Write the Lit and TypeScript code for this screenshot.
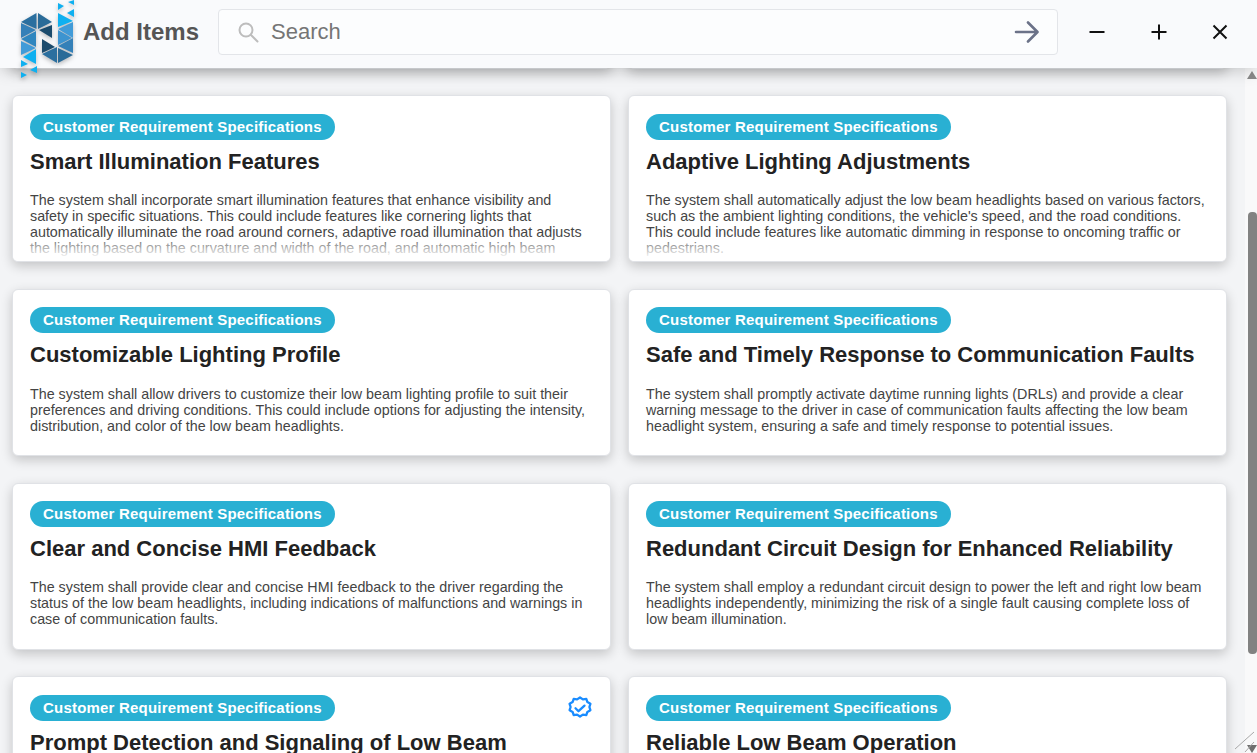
import { LitElement, html, css, svg } from "lit";
import { customElement } from "lit/decorators.js";

type Card = { title: string; body: string; fade?: boolean; check?: boolean };

const cards: Card[] = [
  { title: "Low Beam Headlight Activation", body: "The system shall activate the low beam headlights." },
  { title: "Low Beam Headlight Deactivation", body: "The system shall deactivate the low beam headlights." },
  {
    title: "Smart Illumination Features",
    fade: true,
    body: "The system shall incorporate smart illumination features that enhance visibility and safety in specific situations. This could include features like cornering lights that automatically illuminate the road around corners, adaptive road illumination that adjusts the lighting based on the curvature and width of the road, and automatic high beam assist that switches between high and low beams as needed.",
  },
  {
    title: "Adaptive Lighting Adjustments",
    fade: true,
    body: "The system shall automatically adjust the low beam headlights based on various factors, such as the ambient lighting conditions, the vehicle's speed, and the road conditions. This could include features like automatic dimming in response to oncoming traffic or pedestrians.",
  },
  {
    title: "Customizable Lighting Profile",
    body: "The system shall allow drivers to customize their low beam lighting profile to suit their preferences and driving conditions. This could include options for adjusting the intensity, distribution, and color of the low beam headlights.",
  },
  {
    title: "Safe and Timely Response to Communication Faults",
    body: "The system shall promptly activate daytime running lights (DRLs) and provide a clear warning message to the driver in case of communication faults affecting the low beam headlight system, ensuring a safe and timely response to potential issues.",
  },
  {
    title: "Clear and Concise HMI Feedback",
    body: "The system shall provide clear and concise HMI feedback to the driver regarding the status of the low beam headlights, including indications of malfunctions and warnings in case of communication faults.",
  },
  {
    title: "Redundant Circuit Design for Enhanced Reliability",
    body: "The system shall employ a redundant circuit design to power the left and right low beam headlights independently, minimizing the risk of a single fault causing complete loss of low beam illumination.",
  },
  { title: "Prompt Detection and Signaling of Low Beam", check: true, body: "" },
  { title: "Reliable Low Beam Operation", body: "" },
];

const tris: [string, string][] = [
  ["21,22 36.5,13 36.5,29", "#2b6f9f"],
  ["38,13 52,22 38,29", "#2a6b98"],
  ["39,30 52,25 52,38", "#1a4a6c"],
  ["21,23 36,30 21,38", "#3480b8"],
  ["21,39 36,31 36,47", "#2f86bf"],
  ["21,41 36,48 21,55", "#419bd8"],
  ["36,49 36,64 23,57", "#0fb0f0"],
  ["21,60 28,64 21,67", "#0fb0f0"],
  ["37,66 37,73 30,70", "#0fb0f0"],
  ["21,72 27,75 21,78", "#0fb0f0"],
  ["58,3 64,6 58,10", "#0fb0f0"],
  ["74,0 68,2 74,5", "#0fb0f0"],
  ["74,9 67,13 74,17", "#0fb0f0"],
  ["58,13 73,21 58,27", "#0fb0f0"],
  ["58,29 73,22 73,38", "#419bd8"],
  ["58,30 72,38 58,45", "#3d94d0"],
  ["58,46 73,38 73,53", "#3480b8"],
  ["42,39 55,47 42,53", "#1a4a6c"],
  ["42,54 57,47 57,63", "#2b6f9f"],
  ["58,48 73,55 58,63", "#2a6b98"],
];

@customElement("app-root")
export class AppRoot extends LitElement {
  static styles = css`
    :host {
      display: block;
      height: 753px;
      width: 1257px;
      overflow: hidden;
      position: relative;
      font-family: "Liberation Sans", Arial, sans-serif;
      background: #f3f4f6;
    }
    .header {
      position: relative;
      z-index: 2;
      height: 68px;
      box-sizing: border-box;
      background: #f9fafc;
      box-shadow: 0 2px 16px rgba(0, 0, 0, 0.2);
      display: flex;
      align-items: center;
      padding: 0 17px 4px 83px;
    }
    .logo {
      position: absolute;
      left: 0;
      top: 0;
      width: 80px;
      height: 80px;
      filter: drop-shadow(0 2px 2px rgba(0, 0, 0, 0.25));
    }
    .name {
      font-size: 24px;
      font-weight: 700;
      color: #555;
      width: 135px;
      flex: none;
    }
    .search {
      width: 840px;
      height: 46px;
      box-sizing: border-box;
      flex: none;
      border: 1px solid #e3e5e9;
      border-radius: 4px;
      background: #fcfdfe;
      display: flex;
      align-items: center;
      padding: 0 17px 0 18px;
    }
    .search .mag {
      width: 22px;
      height: 22px;
      flex: none;
    }
    .placeholder {
      margin-left: 12px;
      font-size: 22px;
      color: #757575;
      flex: 1;
    }
    .arrow {
      width: 26px;
      height: 26px;
      flex: none;
    }
    .win {
      display: flex;
      margin-left: 27px;
      gap: 38px;
    }
    .win svg {
      width: 24px;
      height: 24px;
      display: block;
    }
    .win .close {
      margin-left: -1px;
    }
    .main {
      height: 685px;
      overflow: hidden;
      position: relative;
      z-index: 1;
    }
    .grid {
      display: grid;
      grid-template-columns: 599px 599px;
      grid-auto-rows: 167px;
      column-gap: 17px;
      row-gap: 26.67px;
      margin: -166.47px 0 0 12px;
    }
    .card {
      position: relative;
      box-sizing: border-box;
      background: #fff;
      border: 1px solid #e0e2e6;
      border-radius: 6px;
      box-shadow: 0 4px 12px rgba(0, 0, 0, 0.2);
      padding: 17.5px 17px 0;
      overflow: hidden;
    }
    .badge {
      display: inline-block;
      height: 26px;
      line-height: 25px;
      padding: 0 13px;
      border-radius: 13px;
      background: #29b0d3;
      color: #fff;
      font-size: 15px;
      font-weight: 700;
      letter-spacing: 0.2px;
      white-space: nowrap;
    }
    .title {
      margin: 6px 0 0;
      font-size: 22px;
      line-height: 31px;
      font-weight: 700;
      color: #222;
    }
    .body {
      margin: 15.27px 0 0;
      font-size: 14.3px;
      line-height: 16px;
      color: #444;
    }
    .fade::after {
      content: "";
      position: absolute;
      left: 0;
      right: 0;
      bottom: 0;
      height: 26px;
      background: linear-gradient(rgba(255, 255, 255, 0), rgba(255, 255, 255, 0.6) 50%, #fff 90%);
    }
    .check {
      position: absolute;
      top: 18px;
      right: 17px;
      width: 26px;
      height: 26px;
    }
    .scrollbar {
      position: absolute;
      z-index: 1;
      top: 68px;
      right: 0;
      bottom: 0;
      width: 12px;
      background: #f9f9fa;
    }
    .thumb {
      position: absolute;
      top: 144px;
      left: 3px;
      right: 0;
      height: 442px;
      background: #828282;
      border-radius: 4px;
    }
    .up,
    .down {
      position: absolute;
      left: 2px;
      width: 0;
      height: 0;
      border-left: 5px solid transparent;
      border-right: 5px solid transparent;
    }
    .up {
      top: 3px;
      border-bottom: 8px solid #8a8a8a;
    }
    .down {
      bottom: 0;
      border-top: 8px solid #6f6f6f;
    }
    .resize {
      position: absolute;
      z-index: 1;
      right: 0;
      bottom: 0;
      width: 22px;
      height: 22px;
    }
  `;

  private renderCard(c: Card) {
    return html`<div class="card ${c.fade ? "fade" : ""}">
      <span class="badge">Customer Requirement Specifications</span>
      ${c.check
        ? html`<svg class="check" viewBox="0 0 26 26" fill="none" stroke="#1a8cff" stroke-width="2.3" stroke-linejoin="round" stroke-linecap="round">
            <path d="M13 2.5l2.9 1.9 3.4-.5 1.1 3.2 3 1.7-1 3.2 1 3.2-3 1.7-1.1 3.2-3.4-.5-2.9 1.9-2.9-1.9-3.4.5-1.1-3.2-3-1.7 1-3.2-1-3.2 3-1.7 1.1-3.2 3.4.5z" />
            <path d="M8.5 13.2l3 3 6-5.6" />
          </svg>`
        : ""}
      <h3 class="title">${c.title}</h3>
      <p class="body">${c.body}</p>
    </div>`;
  }

  render() {
    return html`
      <div class="header">
        <svg class="logo" viewBox="0 0 80 80">
          ${tris.map(([p, f]) => svg`<polygon points=${p} fill=${f} />`)}
        </svg>
        <div class="name">Add Items</div>
        <div class="search">
          <svg class="mag" viewBox="0 0 22 22" fill="none" stroke="#bdbdbd" stroke-width="2">
            <circle cx="9" cy="9" r="6.5" />
            <path d="M14 14l6.5 6.5" stroke-linecap="round" />
          </svg>
          <span class="placeholder">Search</span>
          <svg class="arrow" viewBox="0 0 26 26" fill="none" stroke="#6b7288" stroke-width="2.6" stroke-linecap="round" stroke-linejoin="round">
            <path d="M2 13h21M14 3.5l9.5 9.5-9.5 9.5" />
          </svg>
        </div>
        <div class="win">
          <svg viewBox="0 0 24 24" fill="none" stroke="#111" stroke-width="2"><path d="M4.5 12h15" /></svg>
          <svg viewBox="0 0 24 24" fill="none" stroke="#111" stroke-width="2"><path d="M4.5 12h15M12 4.5v15" /></svg>
          <svg class="close" viewBox="0 0 24 24" fill="none" stroke="#111" stroke-width="2"><path d="M5.5 5.5l13 13M18.5 5.5l-13 13" /></svg>
        </div>
      </div>
      <div class="main">
        <div class="grid">${cards.map((c) => this.renderCard(c))}</div>
      </div>
      <div class="scrollbar">
        <div class="up"></div>
        <div class="thumb"></div>
        <div class="down"></div>
      </div>
      <svg class="resize" viewBox="0 0 22 22" fill="none" stroke="#a8a8a8" stroke-width="1">
        <path d="M0 18L19 1M10 21L19 11" />
      </svg>
    `;
  }
}
